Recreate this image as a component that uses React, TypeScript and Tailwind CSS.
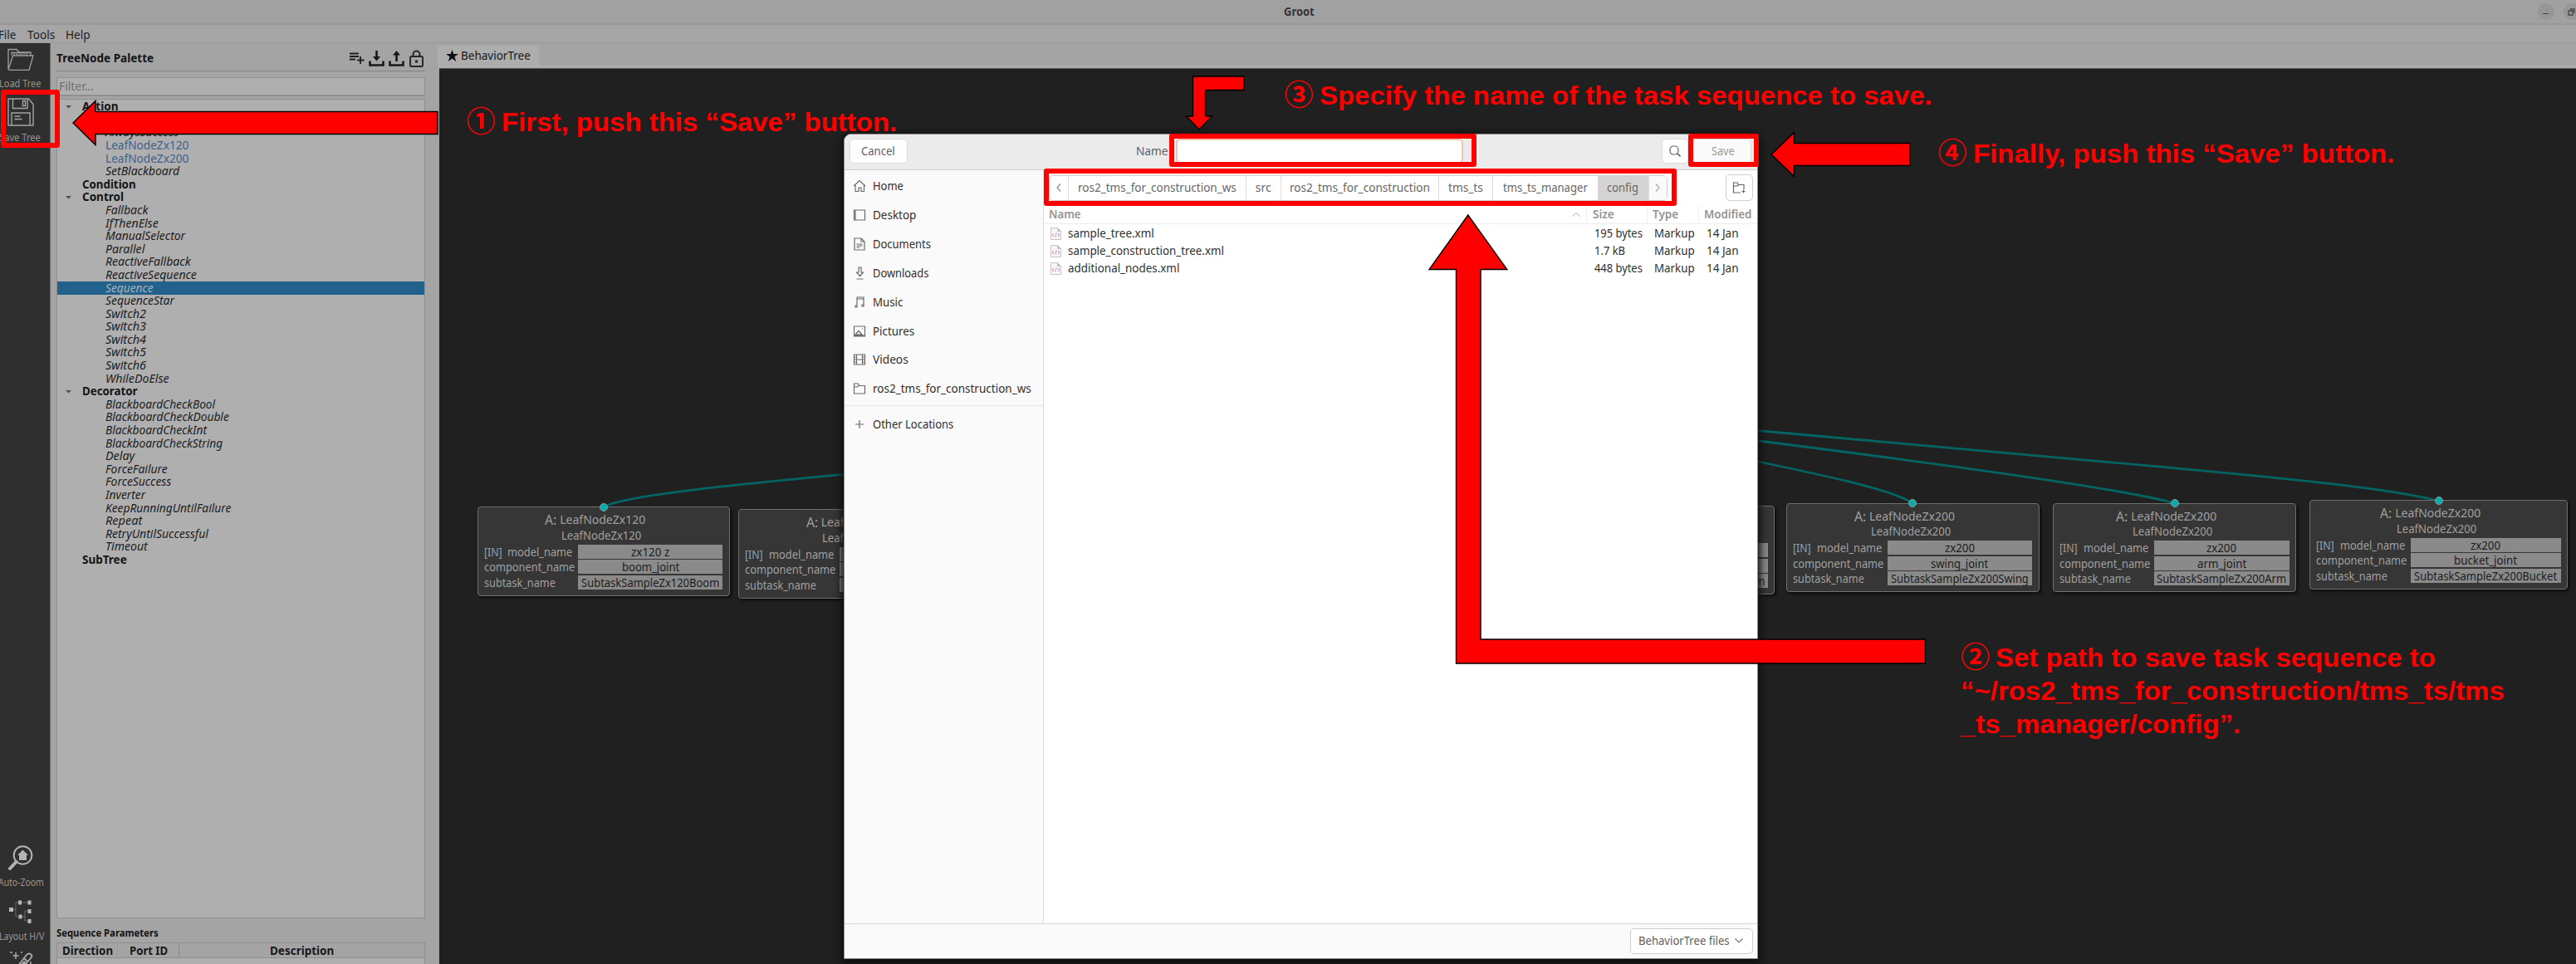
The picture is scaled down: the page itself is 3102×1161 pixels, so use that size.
import { useLayoutEffect, useRef, useState } from "react";
import type { ReactNode } from "react";

/* Text set to an exact advance width; the scale is measured on mount. */
function Fit({ w, className = "", children }: { w: number; className?: string; children: ReactNode }) {
  const ref = useRef<HTMLSpanElement>(null);
  const [k, setK] = useState(1);
  useLayoutEffect(() => {
    if (ref.current) setK(w / ref.current.offsetWidth);
  }, [w]);
  return (
    <span className={"inline-block shrink-0 whitespace-pre " + className} style={{ width: w }}>
      <span ref={ref} className="inline-block origin-left whitespace-pre" style={{ transform: `scaleX(${k})` }}>
        {children}
      </span>
    </span>
  );
}

type Row = { t: string; w: number; kind: "head" | "open" | "item" | "link" | "sel" };
const rows: Row[] = [
  { t: "Action", w: 43, kind: "open" },
  { t: "AlwaysFailure", w: 84, kind: "item" },
  { t: "AlwaysSuccess", w: 88, kind: "item" },
  { t: "LeafNodeZx120", w: 100, kind: "link" },
  { t: "LeafNodeZx200", w: 100, kind: "link" },
  { t: "SetBlackboard", w: 89, kind: "item" },
  { t: "Condition", w: 65, kind: "head" },
  { t: "Control", w: 50, kind: "open" },
  { t: "Fallback", w: 51, kind: "item" },
  { t: "IfThenElse", w: 64, kind: "item" },
  { t: "ManualSelector", w: 96, kind: "item" },
  { t: "Parallel", w: 47, kind: "item" },
  { t: "ReactiveFallback", w: 103, kind: "item" },
  { t: "ReactiveSequence", w: 110, kind: "item" },
  { t: "Sequence", w: 58, kind: "sel" },
  { t: "SequenceStar", w: 83, kind: "item" },
  { t: "Switch2", w: 49, kind: "item" },
  { t: "Switch3", w: 49, kind: "item" },
  { t: "Switch4", w: 49, kind: "item" },
  { t: "Switch5", w: 49, kind: "item" },
  { t: "Switch6", w: 49, kind: "item" },
  { t: "WhileDoElse", w: 77, kind: "item" },
  { t: "Decorator", w: 67, kind: "open" },
  { t: "BlackboardCheckBool", w: 132, kind: "item" },
  { t: "BlackboardCheckDouble", w: 149, kind: "item" },
  { t: "BlackboardCheckInt", w: 122, kind: "item" },
  { t: "BlackboardCheckString", w: 141, kind: "item" },
  { t: "Delay", w: 35, kind: "item" },
  { t: "ForceFailure", w: 75, kind: "item" },
  { t: "ForceSuccess", w: 79, kind: "item" },
  { t: "Inverter", w: 48, kind: "item" },
  { t: "KeepRunningUntilFailure", w: 151, kind: "item" },
  { t: "Repeat", w: 44, kind: "item" },
  { t: "RetryUntilSuccessful", w: 124, kind: "item" },
  { t: "Timeout", w: 51, kind: "item" },
  { t: "SubTree", w: 54, kind: "head" },
];

function TreeRow({ r }: { r: Row }) {
  if (r.kind === "head" || r.kind === "open")
    return (
      <div className="flex h-[15.6px] items-center pl-[10px] font-bold text-[#141414]">
        <svg width="7" height="4" viewBox="0 0 7 4" className="mr-[13px]">
          {r.kind === "open" && <path d="M0 0h7L3.5 3.6z" fill="#505050" />}
        </svg>
        <Fit w={r.w}>{r.t}</Fit>
      </div>
    );
  const tone =
    r.kind === "link" ? "text-[#40608a]" : r.kind === "sel" ? "bg-[#22618b] italic text-[#a9b4bc]" : "italic text-[#1c1c1c]";
  return (
    <div className={"flex h-[15.6px] items-center pl-[58px] " + tone}>
      <Fit w={r.w}>{r.t}</Fit>
    </div>
  );
}

function Toolbar() {
  return (
    <div className="flex w-[61px] shrink-0 flex-col border-r border-[#6d6d6d] bg-[#2f2f2f] text-[12.5px] leading-[14px] text-[#959595]">
      <svg width="32" height="28" viewBox="0 0 32 28" className="mt-[6px] ml-[8.5px]" fill="none" stroke="#9c9c9c" strokeWidth="1.3">
        <path d="M1 26V1.500h10l3 3.500h14v4M1 26 6.500 9H31l-5 17.300H1.500M5 8.500V5.500h22" />
        <path d="M8 8.500V6.500m3 2v-2m3 2v-2m3 2v-2m3 2v-2m3 2v-2" />
      </svg>
      <Fit w={50} className="mt-[8px] -ml-px">Load Tree</Fit>
      <svg width="32" height="34" viewBox="0 0 32 34" className="mt-[10px] ml-[8.5px]" fill="none" stroke="#a4a4a4" strokeWidth="1.4">
        <path d="M1 1h24.500L31 7.500V33H1zM6.500 1v11.500H24V1M18.500 3.500h3v6h-3zM5 33V18h22v15M8.500 22h7M8.500 25.500h9" />
      </svg>
      <Fit w={50} className="mt-[7px] -ml-px">Save Tree</Fit>
      <div className="grow" />
      <svg width="30" height="30" viewBox="0 0 30 30" className="ml-[10px]" fill="none" stroke="#b4b4b4">
        <circle cx="17.500" cy="12" r="10.800" strokeWidth="2" />
        <path d="m9.500 20-7.500 8" strokeWidth="4" strokeLinecap="round" />
        <path d="M17.500 5.500 24 12h-2v6h-9v-6h-2z" fill="#b4b4b4" stroke="none" />
      </svg>
      <Fit w={55} className="mt-[8px] -ml-[2px]">Auto-Zoom</Fit>
      <svg width="28" height="28" viewBox="0 0 28 28" className="mt-[14px] ml-[11px]">
        <path d="M4 11.500h4M8 3v17M8 3h17M8 20h7M15 20h4M19 13v12M19 13h6M19 25h6" stroke="#6a6a6a" fill="none" />
        <path d="M0 9h5v5H0zM11 .500h4v5h-4zM22.500.500h4v5h-4zM22.500 11h4v5h-4zM11.500 17.500h4v5h-4zM22.500 23h4v5h-4z" fill="#b8b8b8" />
      </svg>
      <Fit w={54} className="mt-[9px] -ml-px">Layout H/V</Fit>
      <div className="mt-[11px] h-[15px] overflow-hidden">
        <svg width="30" height="30" viewBox="0 0 30 30" className="ml-[11px]" fill="none" stroke="#aaa">
          <path d="m3 27 18-23q3-3 6 0 1 2-1 4L7 29M18 8l4 4" strokeWidth="1.800" />
          <path d="m2 28 16-17 4 4-14 15z" fill="#aaa" stroke="none" />
          <path d="M8 1v8M4.500 5h7M1 1h3M14 1h2M26 12v4" strokeWidth="1.500" />
        </svg>
      </div>
    </div>
  );
}

function Palette() {
  return (
    <div className="flex w-[466px] shrink-0 flex-col bg-[#a4a4a4] pr-[15px] pl-[7px] text-[13.5px] leading-[15px]">
      <div className="flex h-[34px] items-center border-b border-[#838383] pt-[4px] pr-[2px]">
        <Fit w={117} className="text-sm font-bold text-[#141414]">TreeNode Palette</Fit>
        <div className="grow" />
        <svg width="18" height="16" viewBox="0 0 18 16" className="mr-[5px]" stroke="#202020" strokeWidth="1.800" fill="none">
          <path d="M0 2.500h11M0 6h11M0 9.500h7M13 6v9M9 10.500h8.500" />
        </svg>
        <svg width="19" height="20" viewBox="0 0 19 20" className="mr-[5px]" fill="none" stroke="#181818" strokeWidth="2.600">
          <path d="M1.500 13.500v5h16v-5M9.500 1v10" />
          <path d="M5 8h9l-4.500 5.500z" fill="#181818" stroke="none" />
        </svg>
        <svg width="19" height="20" viewBox="0 0 19 20" className="mr-[6px]" fill="none" stroke="#181818" strokeWidth="2.600">
          <path d="M1.500 13.500v5h16v-5M9.500 14V4" />
          <path d="M5 6.500h9L9.500 1z" fill="#181818" stroke="none" />
        </svg>
        <svg width="17" height="21" viewBox="0 0 17 21" fill="none" stroke="#282828" strokeWidth="2">
          <rect x="1" y="8" width="15" height="12" rx="1.500" />
          <path d="M4.500 8V5.500a4 4 0 0 1 8 0V8" />
          <circle cx="8.500" cy="14" r="1.800" fill="#282828" stroke="none" />
        </svg>
      </div>
      <div className="mt-[7px] flex h-[23px] items-center border border-b-2 border-[#8f8f8f] bg-[#afafaf] pl-[2px] text-[14.500px] text-[#707070]">
        <Fit w={42}>Filter...</Fit>
      </div>
      <div className="mt-[3px] h-[989px] border border-[#8f8f8f] bg-[#afafaf] pt-px">
        {rows.map((r) => (
          <TreeRow key={r.t} r={r} />
        ))}
      </div>
      <Fit w={123} className="mt-[10px] text-[12.500px] font-bold text-[#141414]">Sequence Parameters</Fit>
      <div className="mt-[4px] flex h-[19px] shrink-0 items-center border border-[#8f8f8f] text-sm font-bold text-[#181818]">
        <div className="flex h-full w-[73px] items-center justify-center border-r border-[#989898]">
          <Fit w={61}>Direction</Fit>
        </div>
        <div className="flex h-full w-[74px] items-center justify-center border-r border-[#8a8a8a]">
          <Fit w={46}>Port ID</Fit>
        </div>
        <div className="flex h-full grow items-center justify-center">
          <Fit w={77}>Description</Fit>
        </div>
      </div>
      <div className="h-[7px] border-x border-[#8f8f8f] bg-[#afafaf]" />
    </div>
  );
}

type NodeData = { pos: string; id: string; model: string; mw: number; comp: string; cw: number; task: string; tw: number };
const nodes: NodeData[] = [
  { pos: "left-[45.500px] top-[527px] w-[304px]", id: "LeafNodeZx120", model: "zx120 z", mw: 46, comp: "boom_joint", cw: 69, task: "SubtaskSampleZx120Boom", tw: 166 },
  { pos: "left-[360px] top-[530px] w-[304px]", id: "LeafNodeZx120", model: "zx120", mw: 36, comp: "swing_joint", cw: 69, task: "SubtaskSampleZx120Swing", tw: 166 },
  { pos: "left-[1304px] top-[525.500px] w-[304px]", id: "LeafNodeZx200", model: "zx200", mw: 36, comp: "boom_joint", cw: 69, task: "SubtaskSampleZx200Boom", tw: 166 },
  { pos: "left-[1622px] top-[522.500px] w-[304.500px]", id: "LeafNodeZx200", model: "zx200", mw: 36, comp: "swing_joint", cw: 69, task: "SubtaskSampleZx200Swing", tw: 166 },
  { pos: "left-[1943px] top-[522.500px] w-[293px]", id: "LeafNodeZx200", model: "zx200", mw: 36, comp: "arm_joint", cw: 59, task: "SubtaskSampleZx200Arm", tw: 156 },
  { pos: "left-[2252px] top-[519px] w-[311px]", id: "LeafNodeZx200", model: "zx200", mw: 36, comp: "bucket_joint", cw: 76, task: "SubtaskSampleZx200Bucket", tw: 172 },
];

function Field({ t, w }: { t: string; w: number }) {
  return (
    <div className="flex h-[17px] grow items-center justify-center bg-[#8a8a8a] text-[#1d1d1d]">
      <Fit w={w}>{t}</Fit>
    </div>
  );
}

function TreeNode({ n }: { n: NodeData }) {
  return (
    <div className={"absolute h-[107.500px] rounded-[4px] border-[1.500px] border-[#707070] bg-[#363636] pr-[7.500px] pl-[7px] text-sm leading-[17px] text-[#a0a0a0] shadow-[2px_2px_3px_#0c0c0c] " + n.pos}>
      <div className="absolute -top-[5.500px] left-1/2 size-[10px] -translate-x-1/2 rounded-full border border-[#8c9c9c] bg-[#0aabab]" />
      <div className="mt-[4.500px] flex h-[20px] items-center justify-center pr-[19px]">
        <Fit w={18} className="text-[16.500px]">A: </Fit>
        <Fit w={103}>{n.id}</Fit>
      </div>
      <div className="flex h-[19px] items-center justify-center pr-[5px]">
        <Fit w={96} className="text-[13.500px]">{n.id}</Fit>
      </div>
      <div className="mt-px flex flex-col gap-[1.700px]">
        <div className="flex items-center">
          <Fit w={22} className="mr-[6.500px]">[IN]</Fit>
          <Fit w={78} className="mr-[7px]">model_name</Fit>
          <Field t={n.model} w={n.mw} />
        </div>
        <div className="flex items-center">
          <Fit w={109} className="mr-[4.500px]">component_name</Fit>
          <Field t={n.comp} w={n.cw} />
        </div>
        <div className="flex items-center">
          <Fit w={86} className="mr-[27.500px]">subtask_name</Fit>
          <Field t={n.task} w={n.tw} />
        </div>
      </div>
    </div>
  );
}

function Canvas() {
  return (
    <div className="flex grow flex-col">
      <div className="flex h-[30px] items-end border-b-[3px] border-[#adadad] bg-[#a4a4a4] pt-[3px]">
        <div className="flex h-full w-[122px] items-center bg-[#adadad] pl-[10px] text-[13.500px] leading-[15px] text-[#1a1a1a]">
          <svg width="15" height="14" viewBox="0 0 15 14" className="mr-[3px]">
            <path d="M7.500 0 9.300 5H15l-4.600 3.300L12.200 14 7.500 10.600 2.800 14l1.800-5.700L0 5h5.700z" fill="#111" />
          </svg>
          <Fit w={84}>BehaviorTree</Fit>
        </div>
      </div>
      <div className="relative ml-[2px] grow overflow-hidden border-t border-[#555] bg-[#202020]">
        <svg width="2573" height="1078" viewBox="529 83 2573 1078" className="absolute top-0 left-0" fill="none" stroke="#046464" strokeWidth="2.800">
          <path d="M726 611C745 598 870 585 1020 571" />
          <path d="M2110 518C2300 536 2450 548 2600 562S2870 587 2936 603" />
          <path d="M2110 530C2300 554 2560 589 2618 606" />
          <path d="M2110 554.500C2190 571 2280 590 2303 606" />
        </svg>
        {nodes.map((n) => (
          <TreeNode key={n.pos} n={n} />
        ))}
      </div>
    </div>
  );
}

const places = [
  { t: "Home", w: 37, d: "M1 8 8 1.500 15 8M3 7v7.500h4V10h3v4.500h3.500V7" },
  { t: "Desktop", w: 52, d: "M1.500 2h13v12h-13zM3 2v12" },
  { t: "Documents", w: 69.5, d: "M2 1h8l4 4v10H2zM10 1v4h4M4.500 8h7M4.500 10h7M4.500 12h4" },
  { t: "Downloads", w: 67, d: "M7 1h3v6h2.500l-4 4.500-4-4.500H7zM4.500 15h8" },
  { t: "Music", w: 36, d: "M5 13V2h8v10M5 4h8M3 12h2v2H3zM11 11h2v2h-2z" },
  { t: "Pictures", w: 50.5, d: "M1.500 2h13v12h-13zM2 13h12M3 12l4-4.500 4 4.500zM11 5h1" },
  { t: "Videos", w: 43, d: "M1.500 2h13v12h-13zM4.500 2v12M11.500 2v12M4.500 8h7M2 5h2M2 8h2M2 11h2M12 5h2M12 8h2M12 11h2" },
  { t: "ros2_tms_for_construction_ws", w: 191, d: "M1.500 14V2h5l1.500 2.500h6.500V14zM1.500 6h4L7 4.500" },
];

function PlaceIcon({ d }: { d: string }) {
  return (
    <svg width="16" height="16" viewBox="0 0 16 16" className="mr-[8px]" fill="none" stroke="#6a6a6a" strokeWidth="1.200">
      <path d={d} />
    </svg>
  );
}

const crumbs = [
  { t: "ros2_tms_for_construction_ws", w: 191, c: "w-[214px] border-r" },
  { t: "src", w: 19, c: "w-[42.500px] border-r" },
  { t: "ros2_tms_for_construction", w: 169, c: "w-[189.500px] border-r" },
  { t: "tms_ts", w: 42, c: "w-[65px] border-r" },
  { t: "tms_ts_manager", w: 102, c: "w-[126px]" },
  { t: "config", w: 38, c: "w-[61px] bg-[#d4d4d4]" },
];

const files = [
  { t: "sample_tree.xml", w: 103.5, s: "195 bytes", sw: 58 },
  { t: "sample_construction_tree.xml", w: 188, s: "1.7 kB", sw: 37 },
  { t: "additional_nodes.xml", w: 134, s: "448 bytes", sw: 58 },
];

function SaveDialog() {
  return (
    <div className="absolute top-[161px] left-[1015.500px] flex h-[993.500px] w-[1101px] flex-col overflow-hidden rounded-t-[9px] border border-[#8c8c8c] bg-white text-sm leading-[18px] text-[#303030] shadow-[0_3px_10px_3px_#0e0e0e]">
      <div className="flex h-[43px] shrink-0 items-center border-b border-[#d0d0d0] bg-[#ebebeb] pb-[2px] pl-[6px] text-[#606060]">
        <div className="flex h-[30px] w-[70px] items-center justify-center rounded-[5px] border border-[#dcdcdc] bg-white">
          <Fit w={41}>Cancel</Fit>
        </div>
        <Fit w={38} className="ml-[275.500px]">Name</Fit>
        <div className="ml-[10px] h-[30px] w-[346px] rounded-[5px] border-2 border-[#f3c3b2] bg-white" />
        <div className="ml-[239px] flex h-[30px] w-[32px] items-center justify-center rounded-[5px] border border-[#dcdcdc] bg-white">
          <svg width="14" height="14" viewBox="0 0 14 14" fill="none" stroke="#666" strokeWidth="1.200">
            <rect x="1" y="1" width="10" height="10" rx="4" />
            <path d="m9.500 9.500 4 4" strokeWidth="1.600" />
          </svg>
        </div>
        <div className="ml-[5px] flex h-[30px] w-[71px] items-center justify-center rounded-[5px] border border-[#d8d8d8] bg-[#fafafa] pl-[2px] text-[#999]">
          <Fit w={28}>Save</Fit>
        </div>
      </div>
      <div className="flex grow">
        <div className="flex w-[240px] shrink-0 flex-col border-r border-[#e0e0e0] bg-[#fafafa] pt-[2px]">
          {places.map((p) => (
            <div key={p.t} className="flex h-[34.850px] items-center pl-[10.500px]">
              <PlaceIcon d={p.d} />
              <Fit w={p.w}>{p.t}</Fit>
            </div>
          ))}
          <div className="mt-[2px] flex h-[46px] items-center border-t border-[#e6e6e6] pl-[10.500px]">
            <PlaceIcon d="M3 8h10M8 3v10" />
            <Fit w={97.5}>Other Locations</Fit>
          </div>
        </div>
        <div className="flex grow flex-col">
          <div className="flex h-[42px] items-center pl-[6px]">
            <div className="flex h-[31px] w-[745px] overflow-hidden rounded-[5px] border border-[#cdcdcd] text-[#666]">
              <div className="flex w-[23px] items-center justify-center border-r border-[#dedede]">
                <svg width="6" height="10" viewBox="0 0 6 10" fill="none" stroke="#888" strokeWidth="1.200"><path d="M5 .500 1 5l4 4.500" /></svg>
              </div>
              {crumbs.map((c) => (
                <div key={c.t} className={"flex shrink-0 items-center justify-center border-[#dedede] " + c.c}>
                  <Fit w={c.w}>{c.t}</Fit>
                </div>
              ))}
              <div className="flex grow items-center justify-center border-l border-[#dedede] bg-[#fafafa]">
                <svg width="6" height="10" viewBox="0 0 6 10" fill="none" stroke="#aaa" strokeWidth="1.200"><path d="m1 .500 4 4.500-4 4.500" /></svg>
              </div>
            </div>
            <div className="ml-[70.500px] flex h-[32px] w-[33px] items-center justify-center rounded-[5px] border border-[#cfcfcf]">
              <svg width="17" height="16" viewBox="0 0 17 16" fill="none" stroke="#666" strokeWidth="1.200">
                <path d="M10 14H1.500V2h4.500l1.500 2.500H14V10M1.500 6H6l1.500-1.500M13.500 10.500v4M11.500 12.500h4" />
              </svg>
            </div>
          </div>
          <div className="flex h-[23px] items-center border-b border-[#ececec] pl-[6px] text-[13.500px] font-semibold text-[#949494]">
            <Fit w={38}>Name</Fit>
            <svg width="10" height="5" viewBox="0 0 10 5" className="ml-[592px]" fill="none" stroke="#aaa"><path d="M.500 4.500 5 .500l4.500 4" /></svg>
            <div className="ml-[7.500px] flex h-full w-[73px] items-center border-l border-[#f0f0f0] pl-[7px]"><Fit w={26}>Size</Fit></div>
            <div className="flex h-full w-[62px] items-center border-l border-[#f0f0f0] pl-[6px]"><Fit w={31}>Type</Fit></div>
            <div className="flex h-full items-center border-l border-[#f0f0f0] pl-[6px]"><Fit w={57}>Modified</Fit></div>
          </div>
          <div className="pt-[.500px]">
            {files.map((f) => (
              <div key={f.t} className="flex h-[21.100px] items-center pl-[8px]">
                <svg width="13" height="15" viewBox="0 0 13 15" className="mr-[8.500px]" fill="#f7f7f7" stroke="#c6c6c6">
                  <path d="M.500.500h8l4 4v10H.500z" />
                  <path d="M8.500.500v4h4z" fill="#bbb" />
                  <path d="M4 7 2 9l2 2M9 7l2 2-2 2M7.300 6.500l-1.600 5" fill="none" stroke="#e27bd3" />
                </svg>
                <Fit w={f.w}>{f.t}</Fit>
                <div className="grow" />
                <div className="w-[72px]"><Fit w={f.sw}>{f.s}</Fit></div>
                <div className="w-[63.500px]"><Fit w={48.5}>Markup</Fit></div>
                <div className="w-[60.500px]"><Fit w={38.5}>14 Jan</Fit></div>
              </div>
            ))}
          </div>
        </div>
      </div>
      <div className="flex h-[42px] shrink-0 items-center justify-end border-t border-[#d4d4d4] bg-[#fafafa] pr-[5px] text-[#606060]">
        <div className="flex h-[31px] w-[148px] items-center rounded-[5px] border border-[#cdcdcd] bg-white pl-[9px]">
          <Fit w={109.5}>BehaviorTree files</Fit>
          <svg width="10" height="6" viewBox="0 0 10 6" className="ml-[7px]" fill="none" stroke="#777" strokeWidth="1.200"><path d="m.500.500 4.500 4.500L9.500.500" /></svg>
        </div>
      </div>
    </div>
  );
}

function Note({ pos, n, lines }: { pos: string; n: string; lines: { t: string; w: number }[] }) {
  return (
    <div className={"absolute font-['Liberation_Sans',sans-serif] text-[32px] leading-[40px] font-bold text-[#ff0000] " + pos}>
      <div className="flex h-[40px] items-center">
        <Fit w={35} className="relative -top-[3px] mr-[7px] font-['Noto_Sans_CJK_JP',sans-serif] text-[35px] font-bold">{n}</Fit>
        <Fit w={lines[0].w}>{lines[0].t}</Fit>
      </div>
      {lines.slice(1).map((l) => (
        <div key={l.t} className="h-[40px]">
          <Fit w={l.w}>{l.t}</Fit>
        </div>
      ))}
    </div>
  );
}

function Annotations() {
  return (
    <>
      <div className="absolute top-[107.500px] left-[1px] h-[70.500px] w-[71px] rounded-[3px] border-[6px] border-[#ff0000]" />
      <div className="absolute top-[161px] left-[1408px] h-[40px] w-[370px] rounded-[3px] border-[6px] border-[#ff0000]" />
      <div className="absolute top-[161px] left-[2033px] h-[40px] w-[85px] rounded-[3px] border-[6px] border-[#ff0000]" />
      <div className="absolute top-[203px] left-[1257px] h-[45px] w-[762px] rounded-[3px] border-[6px] border-[#ff0000]" />
      <svg width="3102" height="1161" viewBox="0 0 3102 1161" className="absolute top-0 left-0" fill="#ff0000" stroke="#000" strokeWidth="1.400">
        <path d="M88 148 115 121.500v13h412v27H115v13z" />
        <path d="M1436.500 92h61.500v16.500h-46.500V140h8l-15.500 16-15.500-16h8z" />
        <path d="M2133 186 2160.500 159.500v13H2300v27h-139.500v13z" />
        <path d="m1767.800 259 47 65.500H1783V770h535.500v29H1753.500V324.500h-32.500z" />
      </svg>
      <Note pos="left-[561.500px] top-[127px]" n="①" lines={[{ t: "First, push this “Save” button.", w: 476 }]} />
      <Note pos="left-[1546.500px] top-[95px]" n="③" lines={[{ t: "Specify the name of the task sequence to save.", w: 738 }]} />
      <Note pos="left-[2333.500px] top-[165px]" n="④" lines={[{ t: "Finally, push this “Save” button.", w: 507.5 }]} />
      <Note
        pos="left-[2361px] top-[772px]"
        n="②"
        lines={[
          { t: "Set path to save task sequence to", w: 530 },
          { t: "“~/ros2_tms_for_construction/tms_ts/tms", w: 655 },
          { t: "_ts_manager/config”.", w: 337 },
        ]}
      />
    </>
  );
}

export default function App() {
  return (
    <div className="relative flex h-[1161px] w-[3102px] flex-col overflow-hidden bg-[#a4a4a4] font-['Noto_Sans',sans-serif]">
      <div className="relative flex h-[30px] shrink-0 items-center justify-center border-b-2 border-[#989898] bg-[#a1a1a1] pr-px pl-[28px] text-sm font-bold text-[#333]">
        <Fit w={37}>Groot</Fit>
        <div className="absolute top-[4px] left-[3055.500px] flex gap-[11px]">
          <div className="flex size-5 items-center justify-center rounded-full bg-[#969696]">
            <div className="mt-[5px] h-px w-[7px] bg-[#444]" />
          </div>
          <div className="flex size-5 items-center justify-center rounded-full bg-[#969696]">
            <svg width="9" height="9" viewBox="0 0 9 9" fill="none" stroke="#444" strokeWidth="1.300"><path d="M1 3h5v5H1zM3 1h5v5" /></svg>
          </div>
        </div>
      </div>
      <div className="flex h-[22px] shrink-0 items-center border-b border-[#999] bg-[#a5a5a5] text-[14.500px] leading-[18px] text-[#242424]">
        <Fit w={21} className="-ml-[2.500px]">File</Fit>
        <Fit w={33} className="ml-[14.500px]">Tools</Fit>
        <Fit w={30} className="ml-[12.500px]">Help</Fit>
      </div>
      <div className="flex min-h-0 grow">
        <Toolbar />
        <Palette />
        <Canvas />
      </div>
      <SaveDialog />
      <Annotations />
    </div>
  );
}
